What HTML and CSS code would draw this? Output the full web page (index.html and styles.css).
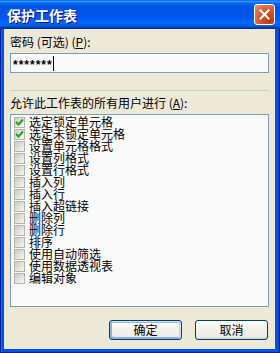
FILE: index.html
```html
<!DOCTYPE html>
<html>
<head>
<meta charset="utf-8">
<link rel="stylesheet" href="styles.css">
</head>
<body>
<div class="window">
  <div class="titlebar">
    <span class="title">保护工作表</span>
    <span class="close"><svg width="11" height="11" viewBox="0 0 11 11"><path d="M1.5 1.5 L9.5 9.5 M9.5 1.5 L1.5 9.5" stroke="#fff" stroke-width="2" stroke-linecap="square"/></svg></span>
  </div>
  <div class="frame">
    <div class="client">
      <div class="label">密码 (可选) (<u>P</u>):</div>
      <div class="input"><span class="stars">*******</span><span class="caret"></span></div>
      <div class="sep"></div>
      <div class="label label2">允许此工作表的所有用户进行 (<u>A</u>):</div>
      <div class="list">
        <div class="row"><span class="cb"><svg width="9" height="9" viewBox="0 0 9 9"><path d="M1 4 L3.5 6.5 L8 1.5" fill="none" stroke="#21a121" stroke-width="2"/></svg></span><span class="txt">选定锁定单元格</span></div>
        <div class="row"><span class="cb"><svg width="9" height="9" viewBox="0 0 9 9"><path d="M1 4 L3.5 6.5 L8 1.5" fill="none" stroke="#21a121" stroke-width="2"/></svg></span><span class="txt">选定未锁定单元格</span></div>
        <div class="row"><span class="cb"></span><span class="txt">设置单元格格式</span></div>
        <div class="row"><span class="cb"></span><span class="txt">设置列格式</span></div>
        <div class="row"><span class="cb"></span><span class="txt">设置行格式</span></div>
        <div class="row"><span class="cb"></span><span class="txt">插入列</span></div>
        <div class="row"><span class="cb"></span><span class="txt">插入行</span></div>
        <div class="row"><span class="cb"></span><span class="txt">插入超链接</span></div>
        <div class="row"><span class="cb"></span><span class="txt">删除列</span></div>
        <div class="row"><span class="cb"></span><span class="txt">删除行</span></div>
        <div class="row"><span class="cb"></span><span class="txt">排序</span></div>
        <div class="row"><span class="cb"></span><span class="txt">使用自动筛选</span></div>
        <div class="row"><span class="cb"></span><span class="txt">使用数据透视表</span></div>
        <div class="row"><span class="cb"></span><span class="txt">编辑对象</span></div>
      </div>
      <div class="buttons">
        <button class="btn default">确定</button>
        <button class="btn">取消</button>
      </div>
    </div>
  </div>
</div>
</body>
</html>
```

FILE: styles.css
```css
* { box-sizing: border-box; }
body {
  margin: 0;
  font-family: "Noto Sans CJK SC", "Noto Sans", sans-serif;
  font-size: 12px;
  color: #000;
  background: #fff;
}
.window {
  width: 280px;
  height: 353px;
  display: flex;
  flex-direction: column;
}
.titlebar {
  height: 29px;
  flex: none;
  display: flex;
  align-items: center;
  justify-content: space-between;
  padding: 0 5px 0 7px;
  background: linear-gradient(to bottom, #0058ee 0%, #3593ff 4%, #288eff 6%, #127dff 8%, #036ffc 10%, #0262ee 14%, #0057e5 20%, #0054e3 24%, #0055eb 56%, #005bf5 66%, #026afe 76%, #0062ef 86%, #0052d6 92%, #0040ab 94%, #003092 100%);
}
.title {
  color: #fff;
  font-weight: bold;
  font-size: 14px;
  line-height: 16px;
  text-shadow: 1px 1px #0f1089;
}
.close {
  width: 21px;
  height: 21px;
  border: 1px solid #fff;
  border-radius: 3px;
  background: radial-gradient(circle at 80% 85%, #c23a0e 0%, #d4532a 45%, #e27a55 80%, #ea9a78 100%);
  display: flex;
  align-items: center;
  justify-content: center;
}
.close svg { display: block; }
.frame {
  flex: 1;
  display: flex;
  padding: 0 5px 4px 4px;
  background: #0054e3;
  box-shadow: inset 1px 0 #001ea0, inset -1px 0 #001ea0, inset 0 -1px #001ea0, inset 2px 0 #166aee, inset -2px 0 #0841c8;
}
.client {
  flex: 1;
  background: #ece9d8;
  display: flex;
  flex-direction: column;
  padding: 6px 6px 0 6px;
}
.label {
  height: 14px;
  line-height: 14px;
  white-space: nowrap;
}
.input {
  margin-top: 4px;
  height: 20px;
  border: 1px solid #7f9db9;
  background: #fafafa;
  display: flex;
  align-items: center;
  padding-left: 2px;
}
.stars {
  font-family: "Liberation Sans", sans-serif;
  font-weight: bold;
  font-size: 12px;
  letter-spacing: 1px;
  line-height: 12px;
  margin-top: 3px;
}
.caret {
  width: 1px;
  height: 15px;
  background: #000;
}
.sep {
  margin-top: 17px;
  height: 1px;
  background: #d0d0bf;
}
.label2 { margin-top: 5px; }
.list {
  margin-top: 4px;
  height: 193px;
  border: 1px solid #7f9db9;
  background: #fafafa;
  padding: 1px 0 0 3px;
  display: flex;
  flex-direction: column;
}
.row {
  height: 12px;
  line-height: 12px;
  display: flex;
  align-items: center;
  white-space: nowrap;
}
.cb {
  width: 11px;
  height: 11px;
  margin-right: 4px;
  border: 1px solid #b5b5ac;
  background: linear-gradient(135deg, #cbcbc2 0%, #e2e2dc 50%, #f6f6f3 100%);
  display: flex;
  align-items: center;
  justify-content: center;
  flex: none;
}
.cb svg { display: block; }
.buttons {
  margin-top: 13px;
  display: flex;
  justify-content: flex-end;
  gap: 13px;
  padding-right: 1px;
}
.btn {
  width: 73px;
  height: 20px;
  padding: 0;
  font-family: "Noto Sans CJK SC", "Noto Sans", sans-serif;
  font-size: 12px;
  line-height: 12px;
  color: #000;
  border: 1px solid #003c74;
  border-radius: 3px;
  background: linear-gradient(180deg, #ffffff 0%, #f3f2ee 40%, #ecebe6 86%, #d6d0c5 100%);
}
.btn.default {
  box-shadow: inset -1px 1px #cee7ff, inset 1px 2px #98b8ea, inset -2px 2px #bcd4f6, inset 1px -1px #89ade4, inset 2px -2px #89ade4;
}
```
